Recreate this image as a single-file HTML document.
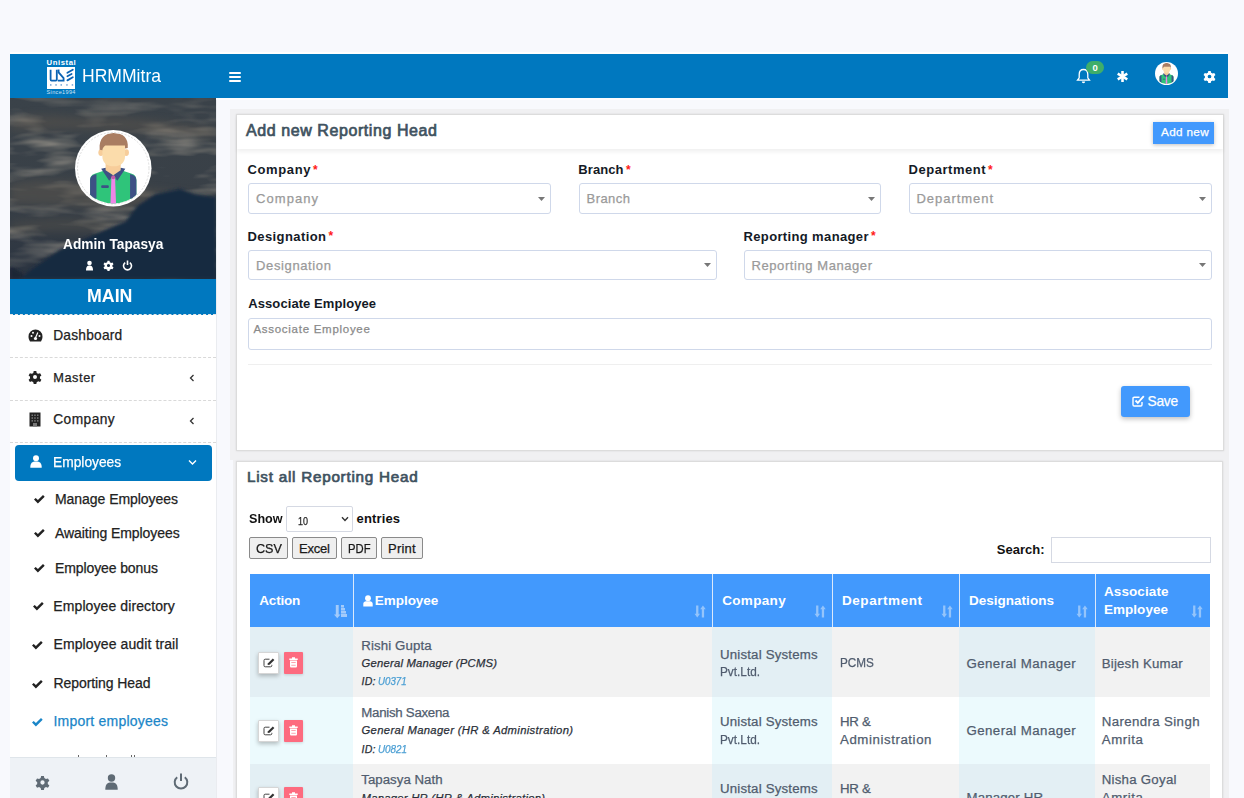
<!DOCTYPE html><html><head><meta charset="utf-8"><style>
html,body{margin:0;padding:0;}
body{width:1244px;height:798px;overflow:hidden;position:relative;background:#f8f9fd;font-family:"Liberation Sans",sans-serif;}
.t{position:absolute;white-space:nowrap;line-height:1;}
.r{position:absolute;}
svg.r{overflow:visible}
</style></head><body>
<div class="r" style="left:10px;top:51.5px;width:1218px;height:2.0px;background:#fff"></div>
<div class="r" style="left:10px;top:53.5px;width:1218px;height:45.0px;background:#0078bf"></div>
<div class="t" style="left:46.60px;top:59.14px;font-size:7.75px;letter-spacing:0.533px;color:#fff;font-weight:bold;">Unistal</div>
<div class="r" style="left:46.6px;top:66.9px;width:28.800000000000004px;height:21.69999999999999px;background:#fff"></div>
<svg class="r" style="left:47px;top:67px" width="28.4" height="21.6" viewBox="0 0 28.4 21.6">
<path d="M3.6 2.8 V12.6 C3.6 13.3 4 13.6 4.6 13.6 H8.8 C9.4 13.6 9.8 13.3 9.8 12.6 V2.8" fill="none" stroke="#0a63b4" stroke-width="1.8"/>
<path d="M11.6 2.6 V5.4 L16.6 11.2 V13.6 H10.8" fill="none" stroke="#0a63b4" stroke-width="1.8"/>
<g stroke="#0a63b4" stroke-width="1.8" stroke-linecap="round"><line x1="20.4" y1="5.8" x2="25.8" y2="2.8"/><line x1="20.4" y1="9.2" x2="24.6" y2="7"/><line x1="20.4" y1="13.4" x2="25.8" y2="10.3"/></g>
<g fill="#5d95cf"><rect x="3" y="17.3" width="1.5" height="1.3"/><rect x="8.3" y="17.3" width="1.5" height="1.3"/><rect x="13.5" y="17.3" width="1.5" height="1.3"/><rect x="19.2" y="17.3" width="1.5" height="1.3"/><rect x="24.7" y="17.3" width="1.5" height="1.3"/></g>
</svg>
<div class="t" style="left:46.60px;top:90.24px;font-size:5.5px;letter-spacing:0.350px;color:#cfe3f5;-webkit-text-stroke:0;">Since1994</div>
<div class="t" style="left:82.00px;top:66.22px;font-size:19.0px;letter-spacing:0.000px;color:#fff;-webkit-text-stroke:0;transform:scaleX(0.9240);transform-origin:0.00px 0;">HRMMitra</div>
<div class="r" style="left:229px;top:71.5px;width:12px;height:2.0px;background:#fff;border-radius:1px"></div>
<div class="r" style="left:229px;top:75.5px;width:12px;height:2.0px;background:#fff;border-radius:1px"></div>
<div class="r" style="left:229px;top:79.5px;width:12px;height:2.0px;background:#fff;border-radius:1px"></div>
<svg class="r" style="left:1076px;top:68px" width="15" height="16" viewBox="0 0 15 16">
<path d="M7.5 1.5 C4.5 1.5 3.2 3.8 3.2 6.5 V9.8 L1.5 12.2 H13.5 L11.8 9.8 V6.5 C11.8 3.8 10.5 1.5 7.5 1.5Z" fill="none" stroke="#fff" stroke-width="1.3"/>
<path d="M5.8 13.5 a1.7 1.7 0 0 0 3.4 0" fill="#fff"/>
</svg>
<div class="r" style="left:1086px;top:61.3px;width:18px;height:13.100000000000009px;background:#3fae6a;border-radius:7px"></div>
<div class="t" style="left:1092.50px;top:63.46px;font-size:9.5px;letter-spacing:0.000px;color:#fff;font-weight:bold;">0</div>
<svg class="r" style="left:1116px;top:70px" width="13" height="13" viewBox="0 0 13 13">
<g stroke="#fff" stroke-width="2.6" stroke-linecap="butt"><line x1="6.5" y1="1" x2="6.5" y2="12"/><line x1="1.7" y1="3.7" x2="11.3" y2="9.3"/><line x1="1.7" y1="9.3" x2="11.3" y2="3.7"/></g>
</svg>
<svg class="r" style="left:1154.5px;top:62px" width="23" height="23" viewBox="0 0 76 76">
<circle cx="38" cy="38" r="38" fill="#fff"/>
<clipPath id="c1154"><circle cx="38" cy="38" r="35"/></clipPath>
<g clip-path="url(#c1154)">
<path d="M15 80 V50 C15 46 17 44 21 43 L30 40 H46 L55 43 C59 44 61 46 61 50 V80Z" fill="#2fc47a"/>
<path d="M15 80 V50 C15 46.5 17 44.6 21.3 43.6 V68 L15 70Z M61 80 V50 C61 46.5 59 44.6 54.7 43.6 V68 L61 70Z" fill="#3d5185"/>
<path d="M26 38.5 L30.5 37.5 L38 45 L34 50.5Z M50 38.5 L45.5 37.5 L38 45 L42 50.5Z" fill="#3d5185"/>
<path d="M36.2 47 H39.8 L41 80 H35Z" fill="#ee86e6"/>
<circle cx="38" cy="47" r="2" fill="#c45aa8"/>
<rect x="26" y="55" width="7.6" height="2.6" rx="1" fill="#3d5185"/>
<path d="M30.4 31 H45.4 V40 L38 45 L30.4 40Z" fill="#f7cd9a"/>
<ellipse cx="25.8" cy="22.4" rx="2.6" ry="3.4" fill="#f7cd9a"/><ellipse cx="51" cy="22.4" rx="2.6" ry="3.4" fill="#f7cd9a"/>
<path d="M27.2 14 V26 C27.2 32 31 36 38.4 36 C45.8 36 49.7 32 49.7 26 V14Z" fill="#fbdcab"/>
<path d="M24.5 19.5 C23.5 8 30 3 38.5 3 C47.5 3 53.5 8 52.4 18 L49.7 18.5 V15.4 H30 C28.5 16.5 27.5 18 27.2 20 Z" fill="#a97d62"/>
</g>
</svg>
<svg class="r" style="left:1203px;top:69.5px" width="13" height="13" viewBox="0 0 14 14"><path d="M7 7 m-1.3 -6 h2.6 l0.4 1.9 a4.6 4.6 0 0 1 1.5 0.9 l1.9 -0.6 1.3 2.2 -1.5 1.3 a4.6 4.6 0 0 1 0 1.7 l1.5 1.3 -1.3 2.2 -1.9 -0.6 a4.6 4.6 0 0 1 -1.5 0.9 l-0.4 1.9 h-2.6 l-0.4 -1.9 a4.6 4.6 0 0 1 -1.5 -0.9 l-1.9 0.6 -1.3 -2.2 1.5 -1.3 a4.6 4.6 0 0 1 0 -1.7 l-1.5 -1.3 1.3 -2.2 1.9 0.6 a4.6 4.6 0 0 1 1.5 -0.9z M7 7 m-2 0 a2 2 0 1 0 4 0 a2 2 0 1 0 -4 0z" fill="#fff" fill-rule="evenodd"/></svg>
<div class="r" style="left:10px;top:98px;width:206px;height:700px;background:#fff"></div>
<svg class="r" style="left:10px;top:98px;overflow:hidden" width="206" height="181" viewBox="0 0 206 181">
<defs>
<linearGradient id="sky" x1="0" y1="0" x2="0" y2="1"><stop offset="0" stop-color="#3a4249"/><stop offset="0.55" stop-color="#394047"/><stop offset="1" stop-color="#2a3340"/></linearGradient>
<filter id="bl" x="-20%" y="-50%" width="140%" height="200%"><feGaussianBlur stdDeviation="4"/></filter>
<filter id="bl2"><feGaussianBlur stdDeviation="1.5"/></filter><filter id="bl3" x="-20%" y="-50%" width="140%" height="200%"><feGaussianBlur stdDeviation="3"/></filter>
</defs>
<rect width="206" height="181" fill="url(#sky)"/>
<filter id="noise" x="0" y="0" width="100%" height="100%"><feTurbulence type="fractalNoise" baseFrequency="0.015 0.07" numOctaves="3" seed="7"/>
<feColorMatrix type="matrix" values="0 0 0 0 0.36  0 0 0 0 0.33  0 0 0 0 0.28  0 0 0 1.8 -0.85"/></filter>
<linearGradient id="fade" x1="0" y1="0" x2="0" y2="1"><stop offset="0" stop-color="#fff" stop-opacity="0.5"/><stop offset="0.15" stop-color="#fff" stop-opacity="1"/><stop offset="0.8" stop-color="#fff" stop-opacity="0.9"/><stop offset="1" stop-color="#fff" stop-opacity="0.4"/></linearGradient>
<mask id="fm"><rect width="206" height="181" fill="url(#fade)"/></mask>
<g mask="url(#fm)"><rect width="206" height="181" filter="url(#noise)"/></g>
<g filter="url(#bl)" opacity="0.45">
<path d="M0 22 C20 14 50 18 80 20 C120 16 160 26 206 30 V40 C170 36 120 34 80 32 C50 30 20 34 0 32Z" fill="#5e574e"/>
<path d="M0 86 C30 78 80 84 120 90 C150 92 180 96 206 100 V110 C170 106 120 112 80 110 C40 106 20 108 0 106Z" fill="#5f584f"/>
<path d="M0 124 C40 118 80 120 110 126 V134 C70 134 40 132 0 136Z" fill="#57524b"/>
</g>
<g filter="url(#bl2)">
<path d="M10 181 L20 172 L50 151.5 L83 137 L116 123 L127 108 L145 96 L170 90.5 L185 96 L206 99 V181Z" fill="#16293f"/>
<path d="M0 181 V168 L14 176 L10 181Z" fill="#1d2836"/>
</g>
</svg>
<svg class="r" style="left:75px;top:130px" width="76.5" height="76.5" viewBox="0 0 76 76">
<circle cx="38" cy="38" r="38" fill="#fff"/><circle cx="38" cy="38" r="35.5" fill="none" stroke="#c8c8c8" stroke-width="0.6" stroke-dasharray="2 1.5"/>
<clipPath id="c75"><circle cx="38" cy="38" r="35"/></clipPath>
<g clip-path="url(#c75)">
<path d="M15 80 V50 C15 46 17 44 21 43 L30 40 H46 L55 43 C59 44 61 46 61 50 V80Z" fill="#2fc47a"/>
<path d="M15 80 V50 C15 46.5 17 44.6 21.3 43.6 V68 L15 70Z M61 80 V50 C61 46.5 59 44.6 54.7 43.6 V68 L61 70Z" fill="#3d5185"/>
<path d="M26 38.5 L30.5 37.5 L38 45 L34 50.5Z M50 38.5 L45.5 37.5 L38 45 L42 50.5Z" fill="#3d5185"/>
<path d="M36.2 47 H39.8 L41 80 H35Z" fill="#ee86e6"/>
<circle cx="38" cy="47" r="2" fill="#c45aa8"/>
<rect x="26" y="55" width="7.6" height="2.6" rx="1" fill="#3d5185"/>
<path d="M30.4 31 H45.4 V40 L38 45 L30.4 40Z" fill="#f7cd9a"/>
<ellipse cx="25.8" cy="22.4" rx="2.6" ry="3.4" fill="#f7cd9a"/><ellipse cx="51" cy="22.4" rx="2.6" ry="3.4" fill="#f7cd9a"/>
<path d="M27.2 14 V26 C27.2 32 31 36 38.4 36 C45.8 36 49.7 32 49.7 26 V14Z" fill="#fbdcab"/>
<path d="M24.5 19.5 C23.5 8 30 3 38.5 3 C47.5 3 53.5 8 52.4 18 L49.7 18.5 V15.4 H30 C28.5 16.5 27.5 18 27.2 20 Z" fill="#a97d62"/>
</g>
</svg>
<div class="t" style="left:63.00px;top:236.00px;font-size:15.0px;letter-spacing:0.000px;color:#fff;font-weight:bold;transform:scaleX(0.9136);transform-origin:0.00px 0;">Admin Tapasya</div>
<svg class="r" style="left:86px;top:260px" width="48" height="11" viewBox="0 0 48 11">
<circle cx="3.5" cy="3" r="2.3" fill="#fff"/><path d="M0 10.5 C0 6.5 1.5 5.5 3.5 5.5 C5.5 5.5 7 6.5 7 10.5Z" fill="#fff"/>
</svg>
<svg class="r" style="left:103px;top:259.5px" width="11" height="11" viewBox="0 0 14 14"><path d="M7 7 m-1.3 -6 h2.6 l0.4 1.9 a4.6 4.6 0 0 1 1.5 0.9 l1.9 -0.6 1.3 2.2 -1.5 1.3 a4.6 4.6 0 0 1 0 1.7 l1.5 1.3 -1.3 2.2 -1.9 -0.6 a4.6 4.6 0 0 1 -1.5 0.9 l-0.4 1.9 h-2.6 l-0.4 -1.9 a4.6 4.6 0 0 1 -1.5 -0.9 l-1.9 0.6 -1.3 -2.2 1.5 -1.3 a4.6 4.6 0 0 1 0 -1.7 l-1.5 -1.3 1.3 -2.2 1.9 0.6 a4.6 4.6 0 0 1 1.5 -0.9z M7 7 m-2 0 a2 2 0 1 0 4 0 a2 2 0 1 0 -4 0z" fill="#fff" fill-rule="evenodd"/></svg>
<svg class="r" style="left:122px;top:260px" width="11" height="11" viewBox="0 0 11 11">
<path d="M3.2 2.6 A4 4 0 1 0 7.8 2.6" fill="none" stroke="#fff" stroke-width="1.6"/><line x1="5.5" y1="0.5" x2="5.5" y2="5" stroke="#fff" stroke-width="1.6"/>
</svg>
<div class="r" style="left:10px;top:279px;width:206px;height:36px;background:#0078bf;border-bottom:1px dashed #e6e6e6;box-sizing:border-box"></div>
<div class="t" style="left:87.00px;top:287.03px;font-size:18.75px;letter-spacing:0.000px;color:#fff;font-weight:bold;transform:scaleX(0.9478);transform-origin:0.00px 0;">MAIN</div>
<div class="r" style="left:10px;top:356.5px;width:206px;height:1.0px;border-top:1px dashed #d9d9d9;box-sizing:border-box"></div>
<div class="r" style="left:10px;top:399.5px;width:206px;height:1.0px;border-top:1px dashed #d9d9d9;box-sizing:border-box"></div>
<div class="r" style="left:10px;top:441.5px;width:206px;height:1.0px;border-top:1px dashed #d9d9d9;box-sizing:border-box"></div>
<div class="t" style="left:53.20px;top:328.76px;font-size:13.75px;letter-spacing:0.225px;color:#222;-webkit-text-stroke:0.25px #222;">Dashboard</div>
<div class="t" style="left:53.20px;top:371.71px;font-size:12.75px;letter-spacing:0.580px;color:#222;-webkit-text-stroke:0.25px #222;">Master</div>
<div class="t" style="left:53.20px;top:413.16px;font-size:13.75px;letter-spacing:0.450px;color:#222;-webkit-text-stroke:0.25px #222;">Company</div>
<svg class="r" style="left:188px;top:373.5px" width="8" height="8" viewBox="0 0 8 8"><path d="M5.5 1 L2.5 4 L5.5 7" fill="none" stroke="#333" stroke-width="1.3"/></svg>
<svg class="r" style="left:188px;top:416.5px" width="8" height="8" viewBox="0 0 8 8"><path d="M5.5 1 L2.5 4 L5.5 7" fill="none" stroke="#333" stroke-width="1.3"/></svg>
<svg class="r" style="left:28px;top:329px" width="15" height="13" viewBox="0 0 15 13">
<path d="M7.5 0.5 A7 7 0 0 0 0.5 7.5 C0.5 9.5 1.2 11 2 12.5 H13 C13.8 11 14.5 9.5 14.5 7.5 A7 7 0 0 0 7.5 0.5Z" fill="#222"/>
<circle cx="7.5" cy="9.5" r="1.6" fill="#fff"/><path d="M7.2 9.5 L9.8 3.5" stroke="#fff" stroke-width="1.2"/>
<circle cx="3.5" cy="7" r="1" fill="#fff"/><circle cx="5" cy="3.8" r="1" fill="#fff"/><circle cx="11.5" cy="7" r="1" fill="#fff"/>
</svg>
<svg class="r" style="left:28px;top:370px" width="14" height="14" viewBox="0 0 14 14"><path d="M7 7 m-1.3 -6 h2.6 l0.4 1.9 a4.6 4.6 0 0 1 1.5 0.9 l1.9 -0.6 1.3 2.2 -1.5 1.3 a4.6 4.6 0 0 1 0 1.7 l1.5 1.3 -1.3 2.2 -1.9 -0.6 a4.6 4.6 0 0 1 -1.5 0.9 l-0.4 1.9 h-2.6 l-0.4 -1.9 a4.6 4.6 0 0 1 -1.5 -0.9 l-1.9 0.6 -1.3 -2.2 1.5 -1.3 a4.6 4.6 0 0 1 0 -1.7 l-1.5 -1.3 1.3 -2.2 1.9 0.6 a4.6 4.6 0 0 1 1.5 -0.9z M7 7 m-2 0 a2 2 0 1 0 4 0 a2 2 0 1 0 -4 0z" fill="#222" fill-rule="evenodd"/></svg>
<svg class="r" style="left:29px;top:412px" width="12" height="15" viewBox="0 0 12 15">
<rect x="0.5" y="0.5" width="11" height="14" fill="#222"/>
<g fill="#777"><rect x="2.5" y="2.5" width="1.5" height="1.5"/><rect x="5.2" y="2.5" width="1.5" height="1.5"/><rect x="8" y="2.5" width="1.5" height="1.5"/>
<rect x="2.5" y="5.3" width="1.5" height="1.5"/><rect x="5.2" y="5.3" width="1.5" height="1.5"/><rect x="8" y="5.3" width="1.5" height="1.5"/>
<rect x="2.5" y="8.1" width="1.5" height="1.5"/><rect x="5.2" y="8.1" width="1.5" height="1.5"/><rect x="8" y="8.1" width="1.5" height="1.5"/></g>
<rect x="4" y="11" width="4" height="3.5" fill="#777"/>
</svg>
<div class="r" style="left:14.5px;top:445px;width:197.0px;height:35.5px;background:#0078bf;border-radius:4px"></div>
<svg class="r" style="left:30px;top:455px" width="12" height="13" viewBox="0 0 12 13">
<circle cx="6" cy="3.2" r="3" fill="#fff"/><path d="M0.3 12.8 C0.3 8 2 6.6 6 6.6 C10 6.6 11.7 8 11.7 12.8Z" fill="#fff"/>
</svg>
<div class="t" style="left:52.90px;top:455.23px;font-size:14.5px;letter-spacing:0.000px;color:#fff;transform:scaleX(0.9498);transform-origin:0.00px 0;-webkit-text-stroke:0.25px #fff;">Employees</div>
<svg class="r" style="left:188px;top:459px" width="9" height="7" viewBox="0 0 9 7"><path d="M1 1.5 L4.5 5 L8 1.5" fill="none" stroke="#fff" stroke-width="1.4"/></svg>
<div class="t" style="left:55.00px;top:491.85px;font-size:14.0px;letter-spacing:-0.047px;color:#222;-webkit-text-stroke:0.25px #222;">Manage Employees</div>
<svg class="r" style="left:34.4px;top:495.2px" width="11" height="9" viewBox="0 0 11 9"><path d="M0 4.6 L1.7 2.9 L3.9 5.1 L9 0 L10.7 1.7 L3.9 8.5Z" fill="#222"/></svg>
<div class="t" style="left:55.00px;top:525.65px;font-size:14.0px;letter-spacing:-0.065px;color:#222;-webkit-text-stroke:0.25px #222;">Awaiting Employees</div>
<svg class="r" style="left:34.4px;top:529.0px" width="11" height="9" viewBox="0 0 11 9"><path d="M0 4.6 L1.7 2.9 L3.9 5.1 L9 0 L10.7 1.7 L3.9 8.5Z" fill="#222"/></svg>
<div class="t" style="left:55.00px;top:560.85px;font-size:14.0px;letter-spacing:-0.108px;color:#222;-webkit-text-stroke:0.25px #222;">Employee bonus</div>
<svg class="r" style="left:34.4px;top:564.2px" width="11" height="9" viewBox="0 0 11 9"><path d="M0 4.6 L1.7 2.9 L3.9 5.1 L9 0 L10.7 1.7 L3.9 8.5Z" fill="#222"/></svg>
<div class="t" style="left:53.30px;top:599.05px;font-size:14.0px;letter-spacing:0.100px;color:#222;-webkit-text-stroke:0.25px #222;">Employee directory</div>
<svg class="r" style="left:32.6px;top:602.4px" width="11" height="9" viewBox="0 0 11 9"><path d="M0 4.6 L1.7 2.9 L3.9 5.1 L9 0 L10.7 1.7 L3.9 8.5Z" fill="#222"/></svg>
<div class="t" style="left:53.50px;top:637.15px;font-size:14.0px;letter-spacing:0.105px;color:#222;-webkit-text-stroke:0.25px #222;">Employee audit trail</div>
<svg class="r" style="left:32.3px;top:640.5px" width="11" height="9" viewBox="0 0 11 9"><path d="M0 4.6 L1.7 2.9 L3.9 5.1 L9 0 L10.7 1.7 L3.9 8.5Z" fill="#222"/></svg>
<div class="t" style="left:53.50px;top:676.15px;font-size:14.0px;letter-spacing:-0.077px;color:#222;-webkit-text-stroke:0.25px #222;">Reporting Head</div>
<svg class="r" style="left:32.3px;top:679.5px" width="11" height="9" viewBox="0 0 11 9"><path d="M0 4.6 L1.7 2.9 L3.9 5.1 L9 0 L10.7 1.7 L3.9 8.5Z" fill="#222"/></svg>
<div class="t" style="left:53.50px;top:714.15px;font-size:14.0px;letter-spacing:0.213px;color:#1b86c8;-webkit-text-stroke:0.25px #1b86c8;">Import employees</div>
<svg class="r" style="left:32.3px;top:717.5px" width="11" height="9" viewBox="0 0 11 9"><path d="M0 4.6 L1.7 2.9 L3.9 5.1 L9 0 L10.7 1.7 L3.9 8.5Z" fill="#1b86c8"/></svg>
<div class="r" style="left:77.5px;top:755px;width:1.2000000000000028px;height:2px;background:#666"></div>
<div class="r" style="left:105.5px;top:755px;width:1.2000000000000028px;height:2px;background:#666"></div>
<div class="r" style="left:131px;top:755px;width:1.1999999999999886px;height:2px;background:#666"></div>
<div class="r" style="left:133.5px;top:755px;width:1.1999999999999886px;height:2px;background:#666"></div>
<div class="r" style="left:10px;top:757px;width:206px;height:41px;background:#eef2f6;border-top:1px solid #dfe5ea;box-sizing:border-box"></div>
<svg class="r" style="left:35px;top:775px" width="15" height="15" viewBox="0 0 14 14"><path d="M7 7 m-1.3 -6 h2.6 l0.4 1.9 a4.6 4.6 0 0 1 1.5 0.9 l1.9 -0.6 1.3 2.2 -1.5 1.3 a4.6 4.6 0 0 1 0 1.7 l1.5 1.3 -1.3 2.2 -1.9 -0.6 a4.6 4.6 0 0 1 -1.5 0.9 l-0.4 1.9 h-2.6 l-0.4 -1.9 a4.6 4.6 0 0 1 -1.5 -0.9 l-1.9 0.6 -1.3 -2.2 1.5 -1.3 a4.6 4.6 0 0 1 0 -1.7 l-1.5 -1.3 1.3 -2.2 1.9 0.6 a4.6 4.6 0 0 1 1.5 -0.9z M7 7 m-2 0 a2 2 0 1 0 4 0 a2 2 0 1 0 -4 0z" fill="#5f6b75" fill-rule="evenodd"/></svg>
<svg class="r" style="left:105px;top:774px" width="13" height="16" viewBox="0 0 13 16">
<circle cx="6.5" cy="4" r="3.7" fill="#5f6b75"/><path d="M0.3 15.8 C0.3 10 2.3 8.4 6.5 8.4 C10.7 8.4 12.7 10 12.7 15.8Z" fill="#5f6b75"/>
</svg>
<svg class="r" style="left:173px;top:773px" width="16" height="17" viewBox="0 0 16 17">
<path d="M4.2 4.2 A6.3 6.3 0 1 0 11.8 4.2" fill="none" stroke="#5f6b75" stroke-width="2"/><line x1="8" y1="0.5" x2="8" y2="8" stroke="#5f6b75" stroke-width="2"/>
</svg>
<div class="r" style="left:230px;top:109px;width:998.5px;height:351px;background:#f0f0f2"></div>
<div class="r" style="left:233px;top:460px;width:995.5px;height:338px;background:#f0f0f2"></div>
<div class="r" style="left:216px;top:98px;width:1px;height:700px;background:#eaecf0"></div>
<div class="r" style="left:216px;top:98px;width:1012px;height:2px;background:#fdfdfe"></div>
<div class="r" style="left:236px;top:114px;width:988px;height:337px;background:#fff;border:1px solid #dcdcdc;box-sizing:border-box;box-shadow:0 0 2px rgba(0,0,0,0.10)"></div>
<div class="r" style="left:237px;top:115px;width:986px;height:34px;background:#fff;box-shadow:0 3px 4px rgba(0,0,0,0.06)"></div>
<div class="t" style="left:246.00px;top:122.96px;font-size:16.0px;letter-spacing:0.581px;color:#3f5260;-webkit-text-stroke:0.7px #3f5260;">Add new Reporting Head</div>
<div class="r" style="left:1152.5px;top:121.8px;width:61.200000000000045px;height:22.000000000000014px;background:#4299fd;box-shadow:0 1px 4px rgba(0,0,0,0.25)"></div>
<div class="t" style="left:1161.00px;top:126.45px;font-size:11.75px;letter-spacing:0.333px;color:#fff;-webkit-text-stroke:0.25px #fff;">Add new</div>
<div class="t" style="left:247.50px;top:163.00px;font-size:13.0px;letter-spacing:0.617px;color:#141a26;font-weight:bold;">Company</div>
<div class="t" style="left:312.9px;top:163.5px;font-size:12px;color:#ff1a1a;font-weight:bold">*</div>
<div class="t" style="left:578.30px;top:163.00px;font-size:13.0px;letter-spacing:0.080px;color:#141a26;font-weight:bold;">Branch</div>
<div class="t" style="left:626.0px;top:163.5px;font-size:12px;color:#ff1a1a;font-weight:bold">*</div>
<div class="t" style="left:908.50px;top:163.00px;font-size:13.0px;letter-spacing:0.533px;color:#141a26;font-weight:bold;">Department</div>
<div class="t" style="left:988.0px;top:163.5px;font-size:12px;color:#ff1a1a;font-weight:bold">*</div>
<div class="r" style="left:248px;top:183.4px;width:303.29999999999995px;height:30.599999999999994px;background:#fff;border:1px solid #cfd8ea;border-radius:3px;box-sizing:border-box"></div>
<div class="t" style="left:256.00px;top:192.20px;font-size:13.0px;letter-spacing:1.067px;color:#9a9a9a;-webkit-text-stroke:0.25px #9a9a9a;">Company</div>
<svg class="r" style="left:538.3px;top:196.7px" width="7" height="4" viewBox="0 0 7 4"><path d="M0 0 H7 L3.5 4Z" fill="#777"/></svg>
<div class="r" style="left:578.5px;top:183.4px;width:302.5px;height:30.599999999999994px;background:#fff;border:1px solid #cfd8ea;border-radius:3px;box-sizing:border-box"></div>
<div class="t" style="left:586.50px;top:192.20px;font-size:13.0px;letter-spacing:0.460px;color:#9a9a9a;-webkit-text-stroke:0.25px #9a9a9a;">Branch</div>
<svg class="r" style="left:868px;top:196.7px" width="7" height="4" viewBox="0 0 7 4"><path d="M0 0 H7 L3.5 4Z" fill="#777"/></svg>
<div class="r" style="left:908.5px;top:183.4px;width:303.5px;height:30.599999999999994px;background:#fff;border:1px solid #cfd8ea;border-radius:3px;box-sizing:border-box"></div>
<div class="t" style="left:916.50px;top:192.20px;font-size:13.0px;letter-spacing:0.956px;color:#9a9a9a;-webkit-text-stroke:0.25px #9a9a9a;">Department</div>
<svg class="r" style="left:1199px;top:196.7px" width="7" height="4" viewBox="0 0 7 4"><path d="M0 0 H7 L3.5 4Z" fill="#777"/></svg>
<div class="t" style="left:247.50px;top:229.80px;font-size:13.0px;letter-spacing:0.410px;color:#141a26;font-weight:bold;">Designation</div>
<div class="t" style="left:328.5px;top:230.3px;font-size:12px;color:#ff1a1a;font-weight:bold">*</div>
<div class="t" style="left:743.50px;top:229.80px;font-size:13.0px;letter-spacing:0.362px;color:#141a26;font-weight:bold;">Reporting manager</div>
<div class="t" style="left:871.0px;top:230.3px;font-size:12px;color:#ff1a1a;font-weight:bold">*</div>
<div class="r" style="left:248px;top:250.3px;width:468.5px;height:30.19999999999999px;background:#fff;border:1px solid #cfd8ea;border-radius:3px;box-sizing:border-box"></div>
<div class="t" style="left:256.00px;top:259.00px;font-size:13.0px;letter-spacing:0.630px;color:#9a9a9a;-webkit-text-stroke:0.25px #9a9a9a;">Designation</div>
<svg class="r" style="left:703.5px;top:263.4px" width="7" height="4" viewBox="0 0 7 4"><path d="M0 0 H7 L3.5 4Z" fill="#777"/></svg>
<div class="r" style="left:743.5px;top:250.3px;width:468.5px;height:30.19999999999999px;background:#fff;border:1px solid #cfd8ea;border-radius:3px;box-sizing:border-box"></div>
<div class="t" style="left:751.50px;top:259.00px;font-size:13.0px;letter-spacing:0.575px;color:#9a9a9a;-webkit-text-stroke:0.25px #9a9a9a;">Reporting Manager</div>
<svg class="r" style="left:1199px;top:263.4px" width="7" height="4" viewBox="0 0 7 4"><path d="M0 0 H7 L3.5 4Z" fill="#777"/></svg>
<div class="t" style="left:248.30px;top:296.70px;font-size:13.0px;letter-spacing:0.076px;color:#141a26;font-weight:bold;">Associate Employee</div>
<div class="r" style="left:248px;top:317.5px;width:964px;height:32.5px;background:#fff;border:1px solid #cfd8ea;border-radius:3px;box-sizing:border-box"></div>
<div class="t" style="left:253.40px;top:324.37px;font-size:11.5px;letter-spacing:0.724px;color:#8a8a8a;-webkit-text-stroke:0.25px #8a8a8a;">Associate Employee</div>
<div class="r" style="left:248px;top:364px;width:964px;height:1px;background:#efefef"></div>
<div class="r" style="left:1121.2px;top:386.3px;width:69.0px;height:30.399999999999977px;background:#4299fd;border-radius:3px;box-shadow:0 2px 5px rgba(0,0,0,0.25)"></div>
<svg class="r" style="left:1131.5px;top:395px" width="13" height="12" viewBox="0 0 13 12">
<path d="M7.5 2.2 H2.2 a1.2 1.2 0 0 0 -1.2 1.2 V9.8 a1.2 1.2 0 0 0 1.2 1.2 H8.8 a1.2 1.2 0 0 0 1.2 -1.2 V7" fill="none" stroke="#fff" stroke-width="1.4"/>
<path d="M3.5 5.5 L5.8 7.8 L11.8 1.2" fill="none" stroke="#fff" stroke-width="1.9"/>
</svg>
<div class="t" style="left:1147.50px;top:394.86px;font-size:13.75px;letter-spacing:-0.267px;color:#fff;-webkit-text-stroke:0.25px #fff;">Save</div>
<div class="r" style="left:236px;top:460.5px;width:987px;height:339.5px;background:#fff;border:1px solid #dcdcdc;box-sizing:border-box;box-shadow:0 0 2px rgba(0,0,0,0.10)"></div>
<div class="t" style="left:247.00px;top:468.59px;font-size:15.25px;letter-spacing:0.745px;color:#3f5260;-webkit-text-stroke:0.7px #3f5260;">List all Reporting Head</div>
<div class="t" style="left:248.90px;top:511.80px;font-size:13.0px;letter-spacing:0.000px;color:#111;font-weight:bold;transform:scaleX(0.9684);transform-origin:0.00px 0;">Show</div>
<div class="r" style="left:285.8px;top:506.4px;width:66.80000000000001px;height:25.800000000000068px;background:#fff;border:1px solid #d5d9e3;box-sizing:border-box;border-radius:2px"></div>
<div class="t" style="left:298.30px;top:515.61px;font-size:10.5px;letter-spacing:0.000px;color:#222;transform:scaleX(0.8547);transform-origin:0.00px 0;-webkit-text-stroke:0.25px #222;">10</div>
<svg class="r" style="left:341px;top:516px" width="8" height="6" viewBox="0 0 8 6"><path d="M1 1.2 L4 4.4 L7 1.2" fill="none" stroke="#333" stroke-width="1.4"/></svg>
<div class="t" style="left:356.60px;top:511.80px;font-size:13.0px;letter-spacing:0.133px;color:#111;font-weight:bold;">entries</div>
<div class="r" style="left:249.3px;top:537.3px;width:39.0px;height:22.200000000000045px;background:#efefef;border:1px solid #8a8a8a;border-radius:2px;box-sizing:border-box"></div>
<div class="t" style="left:255.80px;top:542.00px;font-size:13.0px;letter-spacing:0.000px;color:#1a1a1a;transform:scaleX(0.9701);transform-origin:0.00px 0;-webkit-text-stroke:0.25px #1a1a1a;">CSV</div>
<div class="r" style="left:292.3px;top:537.3px;width:44.5px;height:22.200000000000045px;background:#efefef;border:1px solid #8a8a8a;border-radius:2px;box-sizing:border-box"></div>
<div class="t" style="left:299.00px;top:542.00px;font-size:13.0px;letter-spacing:-0.200px;color:#1a1a1a;-webkit-text-stroke:0.25px #1a1a1a;">Excel</div>
<div class="r" style="left:340.5px;top:537.3px;width:36.5px;height:22.200000000000045px;background:#efefef;border:1px solid #8a8a8a;border-radius:2px;box-sizing:border-box"></div>
<div class="t" style="left:347.50px;top:542.00px;font-size:13.0px;letter-spacing:0.000px;color:#1a1a1a;transform:scaleX(0.8654);transform-origin:0.00px 0;-webkit-text-stroke:0.25px #1a1a1a;">PDF</div>
<div class="r" style="left:381px;top:537.3px;width:41.80000000000001px;height:22.200000000000045px;background:#efefef;border:1px solid #8a8a8a;border-radius:2px;box-sizing:border-box"></div>
<div class="t" style="left:388.00px;top:542.00px;font-size:13.0px;letter-spacing:0.225px;color:#1a1a1a;-webkit-text-stroke:0.25px #1a1a1a;">Print</div>
<div class="t" style="left:996.80px;top:543.30px;font-size:13.0px;letter-spacing:0.000px;color:#111;font-weight:bold;">Search:</div>
<div class="r" style="left:1050.9px;top:537px;width:159.79999999999995px;height:26.299999999999955px;background:#fff;border:1px solid #d5d9e3;box-sizing:border-box"></div>
<div class="r" style="left:250px;top:574px;width:960px;height:53px;background:#4299fd"></div>
<div class="r" style="left:353px;top:574px;width:1px;height:53px;background:#dbe9fb"></div>
<div class="r" style="left:712px;top:574px;width:1px;height:53px;background:#dbe9fb"></div>
<div class="r" style="left:832px;top:574px;width:1px;height:53px;background:#dbe9fb"></div>
<div class="r" style="left:959px;top:574px;width:1px;height:53px;background:#dbe9fb"></div>
<div class="r" style="left:1095px;top:574px;width:1px;height:53px;background:#dbe9fb"></div>
<div class="t" style="left:259.30px;top:593.97px;font-size:13.5px;letter-spacing:-0.200px;color:#fff;font-weight:bold;">Action</div>
<div class="t" style="left:374.70px;top:593.97px;font-size:13.5px;letter-spacing:-0.014px;color:#fff;font-weight:bold;">Employee</div>
<div class="t" style="left:722.20px;top:593.97px;font-size:13.5px;letter-spacing:0.333px;color:#fff;font-weight:bold;">Company</div>
<div class="t" style="left:842.00px;top:593.97px;font-size:13.5px;letter-spacing:0.556px;color:#fff;font-weight:bold;">Department</div>
<div class="t" style="left:968.90px;top:593.97px;font-size:13.5px;letter-spacing:0.027px;color:#fff;font-weight:bold;">Designations</div>
<div class="t" style="left:1104.00px;top:585.37px;font-size:13.5px;letter-spacing:0.088px;color:#fff;font-weight:bold;">Associate</div>
<div class="t" style="left:1104.00px;top:603.07px;font-size:13.5px;letter-spacing:0.029px;color:#fff;font-weight:bold;">Employee</div>
<svg class="r" style="left:363px;top:594.5px" width="10" height="12" viewBox="0 0 10 12">
<circle cx="5" cy="3.2" r="2.9" fill="#fff"/><path d="M0.3 11.5 V8.8 C0.3 7.2 1.6 6.2 3 6.2 H7 C8.4 6.2 9.7 7.2 9.7 8.8 V11.5Z" fill="#fff"/>
</svg>
<svg class="r" style="left:333.5px;top:604.8px" width="14" height="14" viewBox="0 0 14 14">
<g fill="#a3cbfb"><path d="M0 9.6 H6.5 L3.25 13.2Z"/><rect x="1.8" y="0" width="2.9" height="10"/>
<rect x="7" y="0" width="3" height="2.6"/><rect x="7" y="3" width="4" height="2.6"/><rect x="7" y="6" width="5" height="2.6"/><rect x="7" y="9" width="6" height="3"/></g></svg>
<svg class="r" style="left:693.5px;top:605.3px" width="12" height="13" viewBox="0 0 12 13">
<g fill="#94c4fb"><path d="M0.5 8.8 H6 L3.25 12.5Z"/><rect x="2.1" y="0.5" width="2.3" height="8.8"/>
<path d="M6.2 4.2 H11.7 L8.95 0.5Z"/><rect x="7.8" y="3.7" width="2.3" height="8.8"/></g></svg>
<svg class="r" style="left:813.5px;top:605.3px" width="12" height="13" viewBox="0 0 12 13">
<g fill="#94c4fb"><path d="M0.5 8.8 H6 L3.25 12.5Z"/><rect x="2.1" y="0.5" width="2.3" height="8.8"/>
<path d="M6.2 4.2 H11.7 L8.95 0.5Z"/><rect x="7.8" y="3.7" width="2.3" height="8.8"/></g></svg>
<svg class="r" style="left:940.5px;top:605.3px" width="12" height="13" viewBox="0 0 12 13">
<g fill="#94c4fb"><path d="M0.5 8.8 H6 L3.25 12.5Z"/><rect x="2.1" y="0.5" width="2.3" height="8.8"/>
<path d="M6.2 4.2 H11.7 L8.95 0.5Z"/><rect x="7.8" y="3.7" width="2.3" height="8.8"/></g></svg>
<svg class="r" style="left:1076px;top:605.3px" width="12" height="13" viewBox="0 0 12 13">
<g fill="#94c4fb"><path d="M0.5 8.8 H6 L3.25 12.5Z"/><rect x="2.1" y="0.5" width="2.3" height="8.8"/>
<path d="M6.2 4.2 H11.7 L8.95 0.5Z"/><rect x="7.8" y="3.7" width="2.3" height="8.8"/></g></svg>
<svg class="r" style="left:1191px;top:605.3px" width="12" height="13" viewBox="0 0 12 13">
<g fill="#94c4fb"><path d="M0.5 8.8 H6 L3.25 12.5Z"/><rect x="2.1" y="0.5" width="2.3" height="8.8"/>
<path d="M6.2 4.2 H11.7 L8.95 0.5Z"/><rect x="7.8" y="3.7" width="2.3" height="8.8"/></g></svg>
<div class="r" style="left:250px;top:627px;width:103px;height:70px;background:#e3eff4"></div>
<div class="r" style="left:353px;top:627px;width:359px;height:70px;background:#f2f2f2"></div>
<div class="r" style="left:712px;top:627px;width:120px;height:70px;background:#e3eff4"></div>
<div class="r" style="left:832px;top:627px;width:127px;height:70px;background:#f2f2f2"></div>
<div class="r" style="left:959px;top:627px;width:136px;height:70px;background:#e3eff4"></div>
<div class="r" style="left:1095px;top:627px;width:115px;height:70px;background:#f2f2f2"></div>
<div class="r" style="left:250px;top:697px;width:960px;height:1px;background:rgba(255,255,255,0.6)"></div>
<div class="r" style="left:250px;top:697px;width:103px;height:67px;background:#ecfafd"></div>
<div class="r" style="left:353px;top:697px;width:359px;height:67px;background:#ffffff"></div>
<div class="r" style="left:712px;top:697px;width:120px;height:67px;background:#ecfafd"></div>
<div class="r" style="left:832px;top:697px;width:127px;height:67px;background:#ffffff"></div>
<div class="r" style="left:959px;top:697px;width:136px;height:67px;background:#ecfafd"></div>
<div class="r" style="left:1095px;top:697px;width:115px;height:67px;background:#ffffff"></div>
<div class="r" style="left:250px;top:764px;width:960px;height:1px;background:rgba(255,255,255,0.6)"></div>
<div class="r" style="left:250px;top:764px;width:103px;height:70px;background:#e3eff4"></div>
<div class="r" style="left:353px;top:764px;width:359px;height:70px;background:#f2f2f2"></div>
<div class="r" style="left:712px;top:764px;width:120px;height:70px;background:#e3eff4"></div>
<div class="r" style="left:832px;top:764px;width:127px;height:70px;background:#f2f2f2"></div>
<div class="r" style="left:959px;top:764px;width:136px;height:70px;background:#e3eff4"></div>
<div class="r" style="left:1095px;top:764px;width:115px;height:70px;background:#f2f2f2"></div>
<div class="r" style="left:250px;top:834px;width:960px;height:1px;background:rgba(255,255,255,0.6)"></div>
<div class="r" style="left:258px;top:652px;width:21px;height:22px;background:#fff;border:1px solid #d6d6d6;border-radius:1px;box-sizing:border-box;box-shadow:0 2px 4px rgba(0,0,0,0.25)"></div>
<svg class="r" style="left:262.5px;top:657.5px" width="12" height="10" viewBox="0 0 12 10">
<path d="M6.5 1.2 H2.2 a1.2 1.2 0 0 0 -1.2 1.2 V7.6 a1.2 1.2 0 0 0 1.2 1.2 H7.6 a1.2 1.2 0 0 0 1.2 -1.2 V6.8" fill="none" stroke="#444" stroke-width="1"/>
<path d="M4.6 6.9 L5 5.2 L9.8 0.4 L11.4 2 L6.6 6.8Z" fill="#333"/></svg>
<div class="r" style="left:284px;top:652px;width:19px;height:22px;background:#fd6b7f;border-radius:1px;box-shadow:0 1px 3px rgba(0,0,0,0.15)"></div>
<svg class="r" style="left:289px;top:657px" width="9" height="11" viewBox="0 0 9 11">
<path d="M0.3 1.6 H8.7 V3 H0.3Z M3 0.3 H6 V1.6 H3Z" fill="#fff"/>
<path d="M1 3.5 H8 V9.2 C8 10 7.4 10.5 6.6 10.5 H2.4 C1.6 10.5 1 10 1 9.2Z" fill="#fff"/>
<g fill="#fd9aa8"><rect x="2.3" y="5" width="4.4" height="0.9"/><rect x="2.3" y="7.8" width="4.4" height="0.9"/></g></svg>
<div class="t" style="left:361.30px;top:638.68px;font-size:13.25px;letter-spacing:0.110px;color:#505c6e;-webkit-text-stroke:0.25px #505c6e;">Rishi Gupta</div>
<div class="t" style="left:361.50px;top:657.68px;font-size:11.25px;letter-spacing:0.229px;color:#2a2f38;font-style:italic;-webkit-text-stroke:0.25px #2a2f38;">General Manager (PCMS)</div>
<div class="t" style="left:361.50px;top:676.31px;font-size:10.5px;letter-spacing:0.300px;color:#2a2f38;font-style:italic;-webkit-text-stroke:0.25px #2a2f38;">ID:</div>
<div class="t" style="left:377.50px;top:676.31px;font-size:10.5px;letter-spacing:0.000px;color:#4a9ed3;font-style:italic;transform:scaleX(0.9223);transform-origin:0.00px 0;-webkit-text-stroke:0.25px #4a9ed3;">U0371</div>
<div class="t" style="left:720.00px;top:647.88px;font-size:13.25px;letter-spacing:0.186px;color:#505c6e;-webkit-text-stroke:0.25px #505c6e;">Unistal Systems</div>
<div class="t" style="left:720.00px;top:665.38px;font-size:13.25px;letter-spacing:0.000px;color:#505c6e;transform:scaleX(0.8909);transform-origin:0.00px 0;-webkit-text-stroke:0.25px #505c6e;">Pvt.Ltd.</div>
<div class="t" style="left:840.00px;top:656.18px;font-size:13.25px;letter-spacing:0.000px;color:#505c6e;transform:scaleX(0.8851);transform-origin:0.00px 0;-webkit-text-stroke:0.25px #505c6e;">PCMS</div>
<div class="t" style="left:966.50px;top:656.78px;font-size:13.25px;letter-spacing:0.436px;color:#505c6e;-webkit-text-stroke:0.25px #505c6e;">General Manager</div>
<div class="t" style="left:1101.70px;top:656.78px;font-size:13.25px;letter-spacing:0.209px;color:#505c6e;-webkit-text-stroke:0.25px #505c6e;">Bijesh Kumar</div>
<div class="r" style="left:258px;top:720px;width:21px;height:22px;background:#fff;border:1px solid #d6d6d6;border-radius:1px;box-sizing:border-box;box-shadow:0 2px 4px rgba(0,0,0,0.25)"></div>
<svg class="r" style="left:262.5px;top:725.5px" width="12" height="10" viewBox="0 0 12 10">
<path d="M6.5 1.2 H2.2 a1.2 1.2 0 0 0 -1.2 1.2 V7.6 a1.2 1.2 0 0 0 1.2 1.2 H7.6 a1.2 1.2 0 0 0 1.2 -1.2 V6.8" fill="none" stroke="#444" stroke-width="1"/>
<path d="M4.6 6.9 L5 5.2 L9.8 0.4 L11.4 2 L6.6 6.8Z" fill="#333"/></svg>
<div class="r" style="left:284px;top:720px;width:19px;height:22px;background:#fd6b7f;border-radius:1px;box-shadow:0 1px 3px rgba(0,0,0,0.15)"></div>
<svg class="r" style="left:289px;top:725px" width="9" height="11" viewBox="0 0 9 11">
<path d="M0.3 1.6 H8.7 V3 H0.3Z M3 0.3 H6 V1.6 H3Z" fill="#fff"/>
<path d="M1 3.5 H8 V9.2 C8 10 7.4 10.5 6.6 10.5 H2.4 C1.6 10.5 1 10 1 9.2Z" fill="#fff"/>
<g fill="#fd9aa8"><rect x="2.3" y="5" width="4.4" height="0.9"/><rect x="2.3" y="7.8" width="4.4" height="0.9"/></g></svg>
<div class="t" style="left:361.30px;top:706.18px;font-size:13.25px;letter-spacing:-0.267px;color:#505c6e;-webkit-text-stroke:0.25px #505c6e;">Manish Saxena</div>
<div class="t" style="left:361.50px;top:725.48px;font-size:11.25px;letter-spacing:0.347px;color:#2a2f38;font-style:italic;-webkit-text-stroke:0.25px #2a2f38;">General Manager (HR &amp; Administration)</div>
<div class="t" style="left:361.50px;top:743.91px;font-size:10.5px;letter-spacing:0.300px;color:#2a2f38;font-style:italic;-webkit-text-stroke:0.25px #2a2f38;">ID:</div>
<div class="t" style="left:377.50px;top:743.91px;font-size:10.5px;letter-spacing:0.000px;color:#4a9ed3;font-style:italic;transform:scaleX(0.9385);transform-origin:0.00px 0;-webkit-text-stroke:0.25px #4a9ed3;">U0821</div>
<div class="t" style="left:720.00px;top:715.28px;font-size:13.25px;letter-spacing:0.186px;color:#505c6e;-webkit-text-stroke:0.25px #505c6e;">Unistal Systems</div>
<div class="t" style="left:720.00px;top:732.78px;font-size:13.25px;letter-spacing:0.000px;color:#505c6e;transform:scaleX(0.8909);transform-origin:0.00px 0;-webkit-text-stroke:0.25px #505c6e;">Pvt.Ltd.</div>
<div class="t" style="left:840.00px;top:715.28px;font-size:13.25px;letter-spacing:-0.233px;color:#505c6e;-webkit-text-stroke:0.25px #505c6e;">HR &amp;</div>
<div class="t" style="left:840.00px;top:732.78px;font-size:13.25px;letter-spacing:0.577px;color:#505c6e;-webkit-text-stroke:0.25px #505c6e;">Administration</div>
<div class="t" style="left:966.50px;top:724.28px;font-size:13.25px;letter-spacing:0.436px;color:#505c6e;-webkit-text-stroke:0.25px #505c6e;">General Manager</div>
<div class="t" style="left:1101.70px;top:715.28px;font-size:13.25px;letter-spacing:0.385px;color:#505c6e;-webkit-text-stroke:0.25px #505c6e;">Narendra Singh</div>
<div class="t" style="left:1101.70px;top:732.78px;font-size:13.25px;letter-spacing:0.600px;color:#505c6e;-webkit-text-stroke:0.25px #505c6e;">Amrita</div>
<div class="r" style="left:258px;top:787px;width:21px;height:22px;background:#fff;border:1px solid #d6d6d6;border-radius:1px;box-sizing:border-box;box-shadow:0 2px 4px rgba(0,0,0,0.25)"></div>
<svg class="r" style="left:262.5px;top:792.5px" width="12" height="10" viewBox="0 0 12 10">
<path d="M6.5 1.2 H2.2 a1.2 1.2 0 0 0 -1.2 1.2 V7.6 a1.2 1.2 0 0 0 1.2 1.2 H7.6 a1.2 1.2 0 0 0 1.2 -1.2 V6.8" fill="none" stroke="#444" stroke-width="1"/>
<path d="M4.6 6.9 L5 5.2 L9.8 0.4 L11.4 2 L6.6 6.8Z" fill="#333"/></svg>
<div class="r" style="left:284px;top:787px;width:19px;height:22px;background:#fd6b7f;border-radius:1px;box-shadow:0 1px 3px rgba(0,0,0,0.15)"></div>
<svg class="r" style="left:289px;top:792px" width="9" height="11" viewBox="0 0 9 11">
<path d="M0.3 1.6 H8.7 V3 H0.3Z M3 0.3 H6 V1.6 H3Z" fill="#fff"/>
<path d="M1 3.5 H8 V9.2 C8 10 7.4 10.5 6.6 10.5 H2.4 C1.6 10.5 1 10 1 9.2Z" fill="#fff"/>
<g fill="#fd9aa8"><rect x="2.3" y="5" width="4.4" height="0.9"/><rect x="2.3" y="7.8" width="4.4" height="0.9"/></g></svg>
<div class="t" style="left:361.30px;top:773.38px;font-size:13.25px;letter-spacing:0.018px;color:#505c6e;-webkit-text-stroke:0.25px #505c6e;">Tapasya Nath</div>
<div class="t" style="left:361.50px;top:792.78px;font-size:11.25px;letter-spacing:0.265px;color:#2a2f38;font-style:italic;-webkit-text-stroke:0.25px #2a2f38;">Manager HR (HR &amp; Administration)</div>
<div class="t" style="left:720.00px;top:782.28px;font-size:13.25px;letter-spacing:0.186px;color:#505c6e;-webkit-text-stroke:0.25px #505c6e;">Unistal Systems</div>
<div class="t" style="left:840.00px;top:782.28px;font-size:13.25px;letter-spacing:-0.233px;color:#505c6e;-webkit-text-stroke:0.25px #505c6e;">HR &amp;</div>
<div class="t" style="left:966.50px;top:791.28px;font-size:13.25px;letter-spacing:0.156px;color:#505c6e;-webkit-text-stroke:0.25px #505c6e;">Manager HR</div>
<div class="t" style="left:1101.70px;top:773.28px;font-size:13.25px;letter-spacing:0.260px;color:#505c6e;-webkit-text-stroke:0.25px #505c6e;">Nisha Goyal</div>
<div class="t" style="left:1101.70px;top:790.78px;font-size:13.25px;letter-spacing:0.600px;color:#505c6e;-webkit-text-stroke:0.25px #505c6e;">Amrita</div>
</body></html>
